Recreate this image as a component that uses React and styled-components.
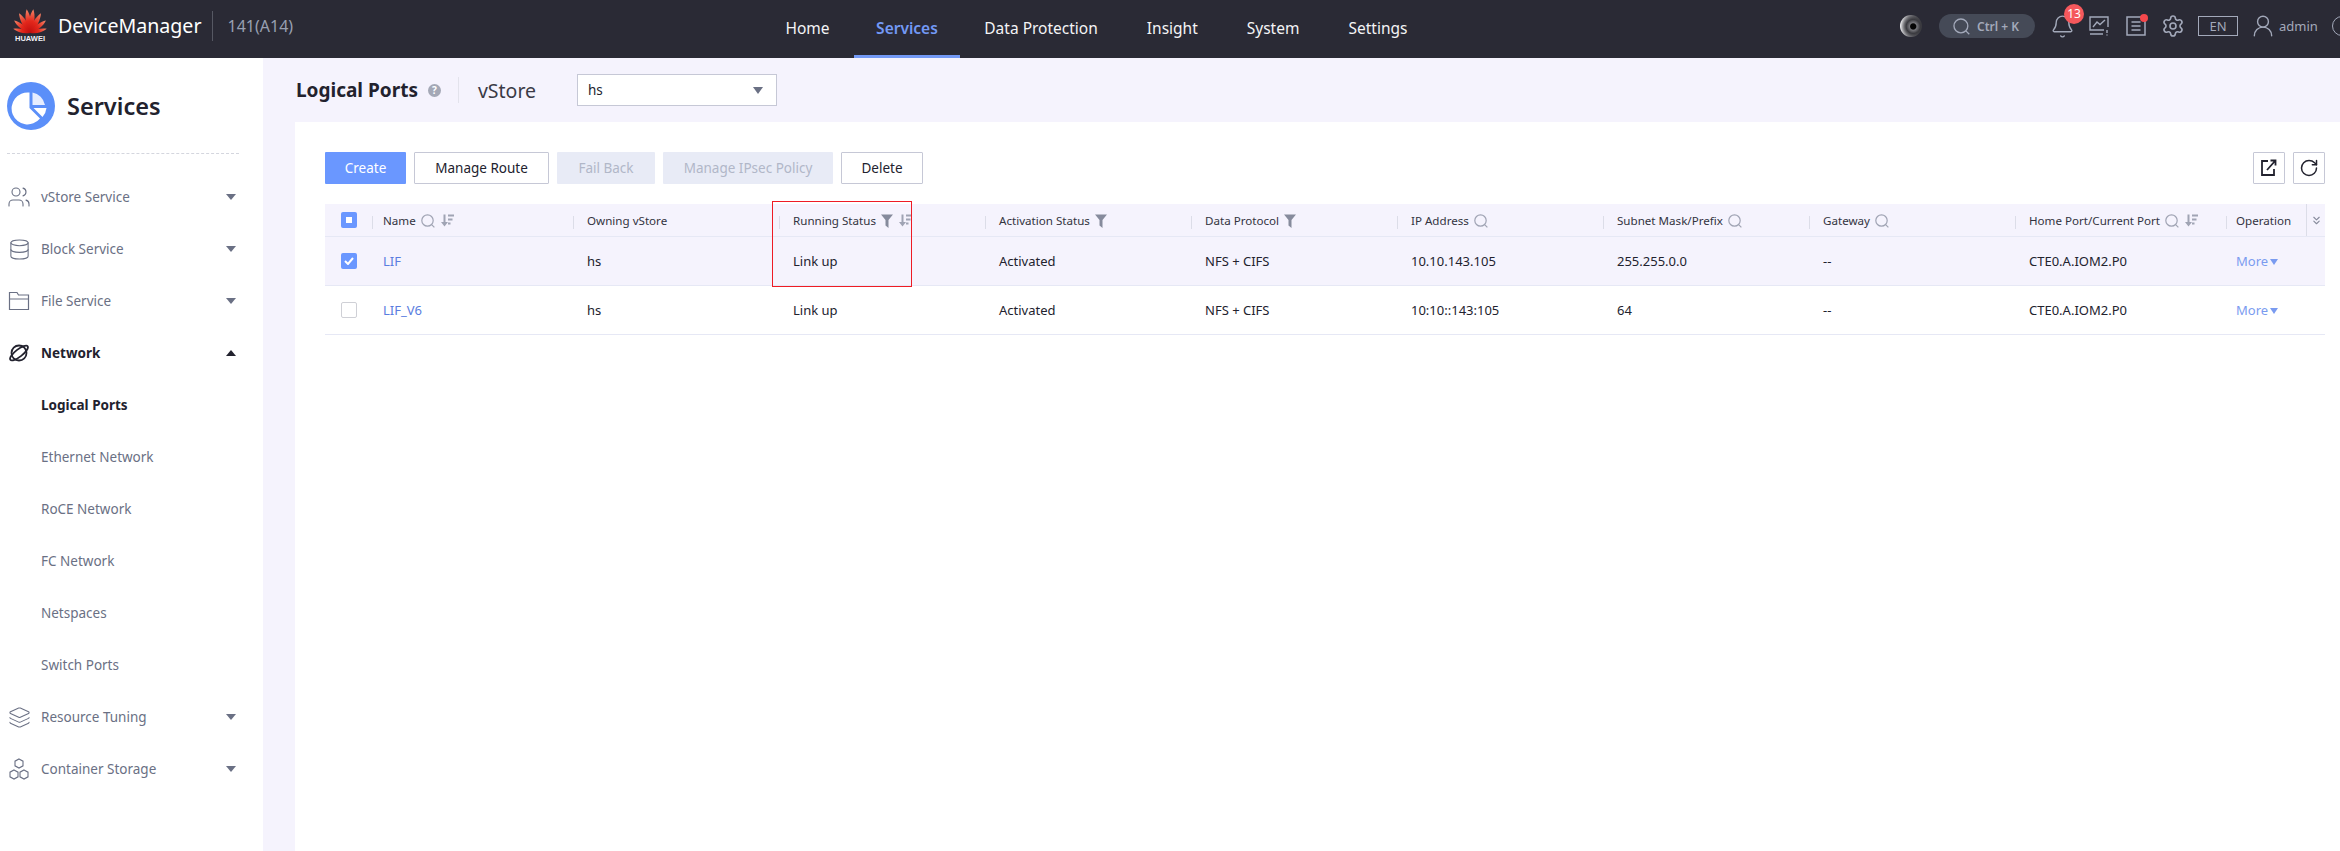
import React from 'react'
import styled, { createGlobalStyle } from 'styled-components'
import { Bell, ChevronsDown, Database, Layers, RotateCw, Settings, UserRound, Users } from 'lucide-react'

const GlobalStyle = createGlobalStyle`
  html, body {
    margin: 0;
    padding: 0;
    height: 851px;
    overflow: hidden;
    background: #fff;
    font-family: "Noto Sans", "Open Sans", sans-serif;
    color: #22222e;
  }
  * { box-sizing: border-box; }
`

const Page = styled.div`
  display: flex;
  flex-direction: column;
  width: 2340px;
  height: 851px;
  overflow: hidden;
`

const TopBar = styled.header`
  display: flex;
  align-items: center;
  flex: 0 0 58px;
  height: 58px;
  background: #2a2a35;
  color: #fff;
  overflow: hidden;
`

const Brand = styled.div`
  display: flex;
  align-items: center;
  flex: 0 0 761px;
  padding: 0 0 6px 13px;
`

const LogoBox = styled.div`
  display: flex;
  flex-direction: column;
  align-items: center;
  width: 34px;
  margin-right: 11px;
`

const LogoWord = styled.span`
  font-family: "Liberation Sans", sans-serif;
  font-size: 7.5px;
  line-height: 8px;
  font-weight: 700;
  color: #f0f0f4;
`

const ProductName = styled.div`
  font-size: 19.6px;
  line-height: 30px;
  padding-right: 10px;
  border-right: 1px solid #565863;
`

const Version = styled.div`
  font-size: 16px;
  color: #98a0b2;
  margin-left: 15px;
`

const Nav = styled.nav`
  display: flex;
  height: 58px;
`

const NavItem = styled.div`
  display: flex;
  align-items: center;
  padding: 0 ${p => (p.$active ? 22 : 24.5)}px;
  font-size: 15.5px;
  font-weight: ${p => (p.$active ? 600 : 400)};
  color: ${p => (p.$active ? '#7399f5' : '#f4f4f6')};
  border-bottom: 3px solid ${p => (p.$active ? '#7399f5' : 'transparent')};
`

const Tools = styled.div`
  display: flex;
  align-items: center;
  margin-left: auto;
  width: 440px;
  flex-shrink: 0;
  padding-bottom: 6px;
  color: #a3a9ba;
  & > * { flex-shrink: 0; }
`

const Lens = styled.div`
  width: 22px;
  height: 22px;
  border-radius: 50%;
  background:
    radial-gradient(circle at 60% 52%, #050505 0 15%, #77777c 21%, #3a3a3f 40%, rgba(46, 46, 51, 0) 72%),
    linear-gradient(90deg, #ececee, #8b8b90 45%, #36363b);
  margin-right: 17px;
`

const SearchPill = styled.div`
  display: flex;
  align-items: center;
  gap: 7px;
  width: 96px;
  height: 24px;
  padding-left: 14px;
  border-radius: 12px;
  background: #454a57;
  font-size: 12px;
  font-weight: 600;
  margin-right: 17px;
`

const ToolIcon = styled.div`
  position: relative;
  display: flex;
  align-items: center;
  justify-content: center;
  width: ${p => p.$w || 20}px;
  height: 22px;
  margin-right: ${p => p.$gap || 17}px;
  svg { flex-shrink: 0; }
`

const CountBadge = styled.span`
  position: absolute;
  top: -11px;
  left: 12px;
  width: 20px;
  height: 20px;
  border-radius: 50%;
  background: #f5585c;
  color: #fff;
  font-size: 12px;
  line-height: 20px;
  text-align: center;
`

const RedDot = styled.span`
  position: absolute;
  top: -1px;
  right: -2px;
  width: 8px;
  height: 8px;
  border-radius: 50%;
  background: #f5484c;
`

const LangBox = styled.div`
  display: flex;
  align-items: center;
  justify-content: center;
  width: 40px;
  height: 20px;
  border: 1.5px solid #a3a9ba;
  font-size: 13px;
  margin-right: 16px;
`

const AdminName = styled.span`
  font-size: 13px;
  margin-right: 14px;
`

const HelpRing = styled.div`
  width: 20px;
  height: 20px;
  border-radius: 50%;
  border: 1.5px solid #a3a9ba;
`

const Body = styled.div`
  display: flex;
  flex: 1;
  min-height: 0;
`

const Sidebar = styled.aside`
  flex: 0 0 263px;
  background: #fff;
  padding: 24px 24px 0 7px;
`

const SideHead = styled.div`
  display: flex;
  align-items: center;
  gap: 12px;
  height: 48px;
  padding-bottom: 23px;
  border-bottom: 1px dashed #d4d6de;
  box-sizing: content-box;
`

const SideTitle = styled.div`
  font-size: 23.5px;
  font-weight: 600;
  color: #22222e;
`

const SideList = styled.div`
  margin-top: 17px;
`

const SideRow = styled.div`
  display: flex;
  align-items: center;
  height: 52px;
  padding-left: ${p => (p.$sub ? 34 : 0)}px;
  font-size: 13.5px;
  color: ${p => (p.$active ? '#22222e' : '#6a7084')};
  font-weight: ${p => (p.$active ? 700 : 400)};
`

const SideIcon = styled.span`
  display: flex;
  justify-content: center;
  width: 22px;
  margin-left: 1px;
  margin-right: 11px;
  color: ${p => (p.$active ? '#22222e' : '#6a7084')};
  svg { flex-shrink: 0; }
`

const Caret = styled.span`
  width: 0;
  height: 0;
  margin-left: auto;
  margin-right: 3px;
  border-left: 5px solid transparent;
  border-right: 5px solid transparent;
  border-top: ${p => (p.$open ? 'none' : '6px solid #6a7084')};
  border-bottom: ${p => (p.$open ? '6px solid #22222e' : 'none')};
`

const Main = styled.main`
  display: flex;
  flex-direction: column;
  flex: 1;
  min-width: 0;
  background: #f5f3fd;
`

const TitleBar = styled.div`
  display: flex;
  align-items: center;
  flex: 0 0 64px;
  padding-left: 33px;
`

const PageTitle = styled.h1`
  margin: 0;
  font-size: 19px;
  font-weight: 700;
  color: #22222e;
`

const HelpDot = styled.span`
  width: 13px;
  height: 13px;
  margin: 0 17px 0 10px;
  border-radius: 50%;
  background: #a4a8b6;
  color: #fff;
  font-size: 10px;
  font-weight: 700;
  line-height: 13px;
  text-align: center;
`

const ScopeLabel = styled.span`
  display: flex;
  align-items: center;
  height: 26px;
  padding-left: 19px;
  border-left: 1px solid #e3e3ec;
  font-size: 19.5px;
  color: #3a3a46;
  width: 119px;
`

const SelectBox = styled.div`
  display: flex;
  align-items: center;
  justify-content: space-between;
  width: 200px;
  height: 32px;
  padding: 0 13px 0 10px;
  background: #fff;
  border: 1.5px solid #c6c8d6;
  font-size: 13.5px;
`

const SmallCaret = styled.span`
  width: 0;
  height: 0;
  border-left: 5px solid transparent;
  border-right: 5px solid transparent;
  border-top: 7px solid #6a7084;
`

const Panel = styled.section`
  flex: 1;
  margin-left: 32px;
  padding: 30px 15px 0 30px;
  background: #fff;
`

const Toolbar = styled.div`
  display: flex;
  gap: 8px;
  margin-bottom: 20px;
`

const Button = styled.button`
  height: 32px;
  width: ${p => p.$w}px;
  padding: 0;
  border-radius: 1px;
  font-family: inherit;
  font-size: 13.5px;
  color: ${p => (p.$primary ? '#fff' : p.disabled ? '#b1b7c8' : '#22222e')};
  background: ${p => (p.$primary ? '#6a97ff' : p.disabled ? '#e8ebf6' : '#fff')};
  border: ${p => (p.$primary || p.disabled ? 'none' : '1px solid #c6c8d6')};
`

const IconButton = styled(Button)`
  display: flex;
  align-items: center;
  justify-content: center;
  color: #22222e;
  margin-left: ${p => (p.$push ? 'auto' : 0)};
`

const Table = styled.div`
  position: relative;
  width: 2000px;
`

const Row = styled.div`
  display: grid;
  grid-template-columns: 47px 201px repeat(7, 206px) 211px 80px 20px;
  align-items: center;
  height: ${p => (p.$head ? 33 : 49)}px;
  font-size: ${p => (p.$head ? 11.6 : 13)}px;
  background: ${p => (p.$tint ? '#f5f3fd' : '#fff')};
  border-bottom: 1.5px solid #e6e8f5;
`

const Cell = styled.div`
  display: flex;
  align-items: center;
  height: 100%;
  padding-left: ${p => p.$pad || 14}px;
  color: ${p => (p.$link ? '#5a7de0' : '#22222e')};
  white-space: nowrap;
`

const HeadCell = styled(Cell)`
  position: relative;
  gap: 5px;
  color: #33333f;
  padding-top: 1px;
  &::before {
    content: '';
    position: absolute;
    left: 0;
    top: ${p => (p.$tall ? 0 : '12px')};
    width: 1px;
    height: ${p => (p.$tall ? '100%' : '13px')};
    background: #dcdde8;
  }
`

const CheckCell = styled.div`
  display: flex;
  align-items: center;
  padding-left: 16px;
`

const Check = styled.span`
  display: flex;
  align-items: center;
  justify-content: center;
  width: 16px;
  height: 16px;
  border-radius: 2px;
  background: ${p => (p.$on ? '#6a97ff' : '#fff')};
  border: ${p => (p.$on ? 'none' : '1.5px solid #cfd0d6')};
  color: #fff;
`

const CheckMark = styled.span`
  width: 6px;
  height: 6px;
  background: #fff;
`

const More = styled.span`
  display: inline-flex;
  align-items: center;
  gap: 2px;
  color: #7a9bf0;
`

const MoreCaret = styled.span`
  width: 0;
  height: 0;
  margin-top: 2px;
  border-left: 4.5px solid transparent;
  border-right: 4.5px solid transparent;
  border-top: 6px solid #7a9bf0;
`

const Highlight = styled.div`
  position: absolute;
  left: 447px;
  top: -3px;
  width: 140px;
  height: 86px;
  border: 1.5px solid #ee1c25;
  pointer-events: none;
`

const petals = [
  { a: -76, l: 0.72 }, { a: -52, l: 0.84 }, { a: -29, l: 0.94 }, { a: -8, l: 1 },
  { a: 8, l: 1 }, { a: 29, l: 0.94 }, { a: 52, l: 0.84 }, { a: 76, l: 0.72 },
]

const HuaweiLogo = () => (
  <svg width="34" height="26" viewBox="0 0 34 26">
    <defs>
      <linearGradient id="petal" x1="0" y1="0" x2="0" y2="1">
        <stop offset="0" stopColor="#f4886a" />
        <stop offset="0.5" stopColor="#e3281c" />
        <stop offset="1" stopColor="#c00d0d" />
      </linearGradient>
    </defs>
    {petals.map(p => (
      <path
        key={p.a}
        d="M0 0 C-4.5 -8 -3.6 -18 0 -24 C3.6 -18 4.5 -8 0 0Z"
        fill="url(#petal)"
        transform={`translate(17 24) rotate(${p.a}) scale(${p.l * 0.85} ${p.l})`}
      />
    ))}
  </svg>
)

const ServicesIcon = () => (
  <svg width="48" height="48" viewBox="0 0 48 48">
    <circle cx="24" cy="24" r="24" fill="#5b8ff9" />
    <path d="M22.5 10.5 V26 L33 36.5 A16 16 0 1 1 22.5 10.5Z" fill="#fff" />
    <path d="M25.5 10.5 A16 16 0 0 1 38 23 H25.5Z" fill="#e6edff" />
    <path d="M26.5 26 H39.5 A16 16 0 0 1 35.5 35Z" fill="#fff" />
  </svg>
)

const SearchGlyph = ({ size = 14, color = '#a0a4b4', w = 1.2 }) => (
  <svg width={size} height={size} viewBox="0 0 14 14" fill="none" stroke={color} strokeWidth={w}>
    <circle cx="6.5" cy="6.5" r="5.7" />
    <path d="M10.6 10.6 L13.4 13.4" />
  </svg>
)

const FolderIcon = () => (
  <svg width="22" height="20" viewBox="0 0 22 20" fill="none" stroke="currentColor" strokeWidth="1.2">
    <path d="M1.5 18.5 V1.5 H9 L10.5 4 H20.5 V18.5Z M1.5 8 H20.5" />
  </svg>
)

const PlanetIcon = () => (
  <svg width="22" height="20" viewBox="0 0 22 20" fill="none" stroke="currentColor" strokeWidth="1.8">
    <circle cx="11" cy="10" r="7.5" />
    <ellipse cx="11" cy="10" rx="11" ry="3.6" transform="rotate(-38 11 10)" />
  </svg>
)

const HexesIcon = () => (
  <svg width="22" height="23" viewBox="0 0 22 23" fill="none" stroke="currentColor" strokeWidth="1.1">
    <path d="M11 1 L15 3.2 V7.8 L11 10 L7 7.8 V3.2Z" />
    <path d="M6 12 L10 14.2 V18.8 L6 21 L2 18.8 V14.2Z" />
    <path d="M16 12 L20 14.2 V18.8 L16 21 L12 18.8 V14.2Z" />
  </svg>
)

const ChartIcon = () => (
  <svg width="20" height="20" viewBox="0 0 20 20" fill="none" stroke="currentColor" strokeWidth="1.4">
    <path d="M15 14 H1 V1 H19 V11 M1 18 H14 M18 14 V17 M18 18.4 V19.6" />
    <path d="M4 11 L8 6 L11 8.5 L16 4" />
  </svg>
)

const ListIcon = () => (
  <svg width="20" height="20" viewBox="0 0 20 20" fill="none" stroke="currentColor" strokeWidth="1.5">
    <path d="M1 1 H19 V19 H1Z M5.5 6 H14.5 M5.5 10 H14.5 M5.5 14 H14.5" />
  </svg>
)

const SortIcon = () => (
  <svg width="14" height="13" viewBox="0 0 14 13" fill="#a0a4b4">
    <path d="M3.5 0.5 H5.5 V8 H8 L4.5 12.5 L1 8 H3.5Z" />
    <path d="M8 0.5 H14 V2.5 H8Z M8 4.5 H12.5 V6.5 H8Z M8 8.5 H10.5 V10.5 H8Z" />
  </svg>
)

const FilterIcon = () => (
  <svg width="12" height="14" viewBox="0 0 12 14" fill="#868b9c">
    <path d="M0 0.5 H12 L7.5 6 V14 L4.5 11.5 V6Z" />
  </svg>
)

const ExportIcon = () => (
  <svg width="18" height="18" viewBox="0 0 18 18" fill="none" stroke="currentColor" strokeWidth="1.8">
    <path d="M8 2 H2 V16 H14 V10" />
    <path d="M7 11 L15 2 M10.5 1.5 H15.5 V6.5" />
  </svg>
)

const sideItems = [
  { label: 'vStore Service', icon: <Users size={24} strokeWidth={1.1} /> },
  { label: 'Block Service', icon: <Database size={23} strokeWidth={1.1} /> },
  { label: 'File Service', icon: <FolderIcon /> },
  { label: 'Network', icon: <PlanetIcon />, active: true, open: true },
  { label: 'Logical Ports', sub: true, active: true },
  { label: 'Ethernet Network', sub: true },
  { label: 'RoCE Network', sub: true },
  { label: 'FC Network', sub: true },
  { label: 'Netspaces', sub: true },
  { label: 'Switch Ports', sub: true },
  { label: 'Resource Tuning', icon: <Layers size={23} strokeWidth={1.1} /> },
  { label: 'Container Storage', icon: <HexesIcon /> },
]

const columns = [
  { label: 'Name', search: true, sort: true, pad: 11 },
  { label: 'Owning vStore' },
  { label: 'Running Status', filter: true, sort: true },
  { label: 'Activation Status', filter: true },
  { label: 'Data Protocol', filter: true },
  { label: 'IP Address', search: true },
  { label: 'Subnet Mask/Prefix', search: true },
  { label: 'Gateway', search: true },
  { label: 'Home Port/Current Port', search: true, sort: true },
  { label: 'Operation', pad: 10 },
]

const ports = [
  { name: 'LIF', ip: '10.10.143.105', mask: '255.255.0.0', on: true },
  { name: 'LIF_V6', ip: '10:10::143:105', mask: '64' },
]

const App = () => {
  return (
    <Page>
      <GlobalStyle />
      <TopBar>
        <Brand>
          <LogoBox>
            <HuaweiLogo />
            <LogoWord>HUAWEI</LogoWord>
          </LogoBox>
          <ProductName>DeviceManager</ProductName>
          <Version>141(A14)</Version>
        </Brand>
        <Nav>
          <NavItem>Home</NavItem>
          <NavItem $active>Services</NavItem>
          <NavItem>Data Protection</NavItem>
          <NavItem>Insight</NavItem>
          <NavItem>System</NavItem>
          <NavItem>Settings</NavItem>
        </Nav>
        <Tools>
          <Lens />
          <SearchPill>
            <SearchGlyph size={17} color="#a3a9ba" w={1.1} />
            Ctrl + K
          </SearchPill>
          <ToolIcon>
            <Bell size={25} strokeWidth={1.3} />
            <CountBadge>13</CountBadge>
          </ToolIcon>
          <ToolIcon><ChartIcon /></ToolIcon>
          <ToolIcon>
            <ListIcon />
            <RedDot />
          </ToolIcon>
          <ToolIcon $gap={15}><Settings size={24} strokeWidth={1.6} /></ToolIcon>
          <LangBox>EN</LangBox>
          <ToolIcon $w={18} $gap={7}><UserRound size={26} strokeWidth={1.3} /></ToolIcon>
          <AdminName>admin</AdminName>
          <HelpRing />
        </Tools>
      </TopBar>
      <Body>
        <Sidebar>
          <SideHead>
            <ServicesIcon />
            <SideTitle>Services</SideTitle>
          </SideHead>
          <SideList>
            {sideItems.map(item => (
              <SideRow key={item.label} $sub={item.sub} $active={item.active}>
                {item.icon && <SideIcon $active={item.active}>{item.icon}</SideIcon>}
                {item.label}
                {item.icon && <Caret $open={item.open} />}
              </SideRow>
            ))}
          </SideList>
        </Sidebar>
        <Main>
          <TitleBar>
            <PageTitle>Logical Ports</PageTitle>
            <HelpDot>?</HelpDot>
            <ScopeLabel>vStore</ScopeLabel>
            <SelectBox>
              hs
              <SmallCaret />
            </SelectBox>
          </TitleBar>
          <Panel>
            <Toolbar>
              <Button $primary $w={81}>Create</Button>
              <Button $w={135}>Manage Route</Button>
              <Button disabled $w={98}>Fail Back</Button>
              <Button disabled $w={170}>Manage IPsec Policy</Button>
              <Button $w={82}>Delete</Button>
              <IconButton $push $w={32}><ExportIcon /></IconButton>
              <IconButton $w={32}><RotateCw size={20} strokeWidth={1.8} /></IconButton>
            </Toolbar>
            <Table>
              <Row $head $tint>
                <CheckCell><Check $on><CheckMark /></Check></CheckCell>
                {columns.map(col => (
                  <HeadCell key={col.label} $pad={col.pad}>
                    {col.label}
                    {col.search && <SearchGlyph />}
                    {col.filter && <FilterIcon />}
                    {col.sort && <SortIcon />}
                  </HeadCell>
                ))}
                <HeadCell $tall $pad={4}><ChevronsDown size={13} color="#868b9c" /></HeadCell>
              </Row>
              {ports.map(port => (
                <Row key={port.name} $tint={port.on}>
                  <CheckCell>
                    <Check $on={port.on}>
                      {port.on && (
                        <svg width="10" height="8" viewBox="0 0 10 8" fill="none" stroke="#fff" strokeWidth="2">
                          <path d="M1 4 L4 7 L9 1" />
                        </svg>
                      )}
                    </Check>
                  </CheckCell>
                  <Cell $link $pad={11}>{port.name}</Cell>
                  <Cell>hs</Cell>
                  <Cell>Link up</Cell>
                  <Cell>Activated</Cell>
                  <Cell>NFS + CIFS</Cell>
                  <Cell>{port.ip}</Cell>
                  <Cell>{port.mask}</Cell>
                  <Cell>--</Cell>
                  <Cell>CTE0.A.IOM2.P0</Cell>
                  <Cell $pad={10}>
                    <More>More<MoreCaret /></More>
                  </Cell>
                  <Cell />
                </Row>
              ))}
              <Highlight />
            </Table>
          </Panel>
        </Main>
      </Body>
    </Page>
  )
}

export default App
